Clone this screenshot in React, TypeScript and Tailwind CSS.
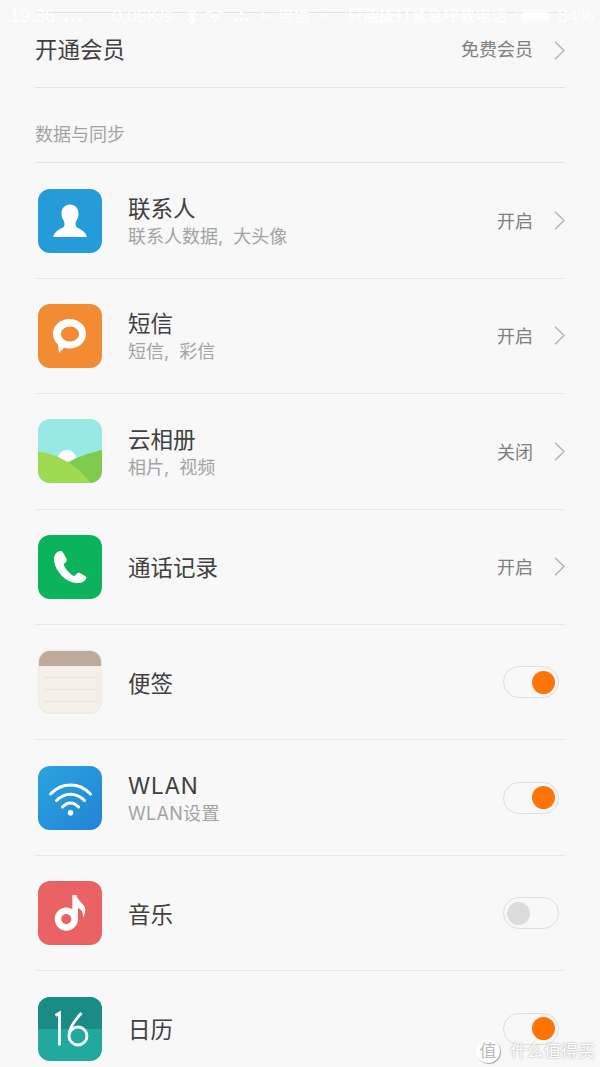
import { Bluetooth } from 'lucide-react';
import type { ReactNode } from 'react';

const font = "font-['Inter','Noto_Sans_CJK_SC',sans-serif]";

function Chevron() {
    return (
        <svg width="11" height="19" viewBox="0 0 11 19" fill="none" className="ml-[21px] shrink-0">
            <path d="M1 0.800 L10 9.500 L1 18.200" stroke="#b4b4b4" strokeWidth="1.500" />
        </svg>
    );
}

function Toggle({ on }: { on: boolean }) {
    return (
        <div
            className={`mr-[6px] flex h-[32px] w-[56px] items-center rounded-full border border-[#dedede] ${
                on ? 'justify-end pr-[3px]' : 'justify-start pl-[3px]'
            }`}
        >
            <div className={`h-[23px] w-[23px] rounded-full ${on ? 'bg-[#ff7505]' : 'bg-[#dcdcdc]'}`} />
        </div>
    );
}

function IconBox({ className, children }: { className?: string; children?: ReactNode }) {
    return (
        <div className={`ml-[3px] h-[64px] w-[64px] shrink-0 overflow-hidden rounded-[12px] ${className ?? ''}`}>
            {children}
        </div>
    );
}

function ContactsIcon() {
    return (
        <IconBox className="bg-[#269bd9]">
            <svg viewBox="0 0 64 64" className="h-full w-full">
                <path
                    fill="#fff"
                    d="M32 15.500 C37 15.500 40.500 19 40.500 24.500 C40.500 27 40 29 39 30.500 C38 32 37.500 33.500 37.500 35 C37.500 37 38.500 38.500 41 39.500 C44 41 47 43 48.500 46.500 C48.800 47.500 48.300 48 47.500 48 L16.500 48 C15.700 48 15.200 47.500 15.500 46.500 C17 43 20 41 23 39.500 C25.500 38.500 26.500 37 26.500 35 C26.500 33.500 26 32 25 30.500 C24 29 23.500 27 23.500 24.500 C23.500 19 27 15.500 32 15.500 Z"
                />
            </svg>
        </IconBox>
    );
}

function SmsIcon() {
    return (
        <IconBox className="bg-[#f28b32]">
            <svg viewBox="0 0 64 64" className="h-full w-full">
                <path
                    fill="#fff"
                    fillRule="evenodd"
                    d="M31.500 15 C41 15 48 21.500 48 29.500 C48 38 41 44.500 31.500 44.500 C29 44.500 27.500 44.200 26 43.700 L21 49 L20 40.800 C17 38 15 34 15 29.500 C15 21.500 22 15 31.500 15 Z M32 22.500 C27 22.500 23 25.800 23 30 C23 34.200 27 37.500 32 37.500 C37 37.500 41 34.200 41 30 C41 25.800 37 22.500 32 22.500 Z"
                />
            </svg>
        </IconBox>
    );
}

function GalleryIcon() {
    return (
        <IconBox className="bg-[#98e9e5]">
            <svg viewBox="0 0 64 64" className="h-full w-full">
                <circle cx="29" cy="40.500" r="9.500" fill="#fff" />
                <path fill="#7fcb4b" d="M29 44 C39 38 51 34 64 31 L64 64 L29 64 Z" />
                <path fill="#9edb52" d="M0 32.500 C12 34 22 38 31 44 C41 50 47 57 53 64 L0 64 Z" />
            </svg>
        </IconBox>
    );
}

function PhoneIcon() {
    return (
        <IconBox className="bg-[#0ab35c]">
            <svg viewBox="0 0 64 64" className="h-full w-full">
                <path
                    fill="#fff"
                    d="M20.500 16.500 C18 17.500 16 20 16 24 C16 30 19.500 36.500 24.500 41.500 C29.500 46.500 36.500 48.500 41.500 48 C44.500 47.700 46.500 46 48 44 C48.700 43 48.500 42 47.500 41.300 L42 38 C41 37.500 40 37.500 39.300 38.300 L37 40.500 C36.300 41 35.500 41 34.800 40.500 C31 38 28 34.500 26 30.500 C25.700 29.700 25.800 29 26.300 28.500 L28.300 26.500 C29 25.700 29 24.800 28.500 23.800 L25 17.500 C24 16 22 15.800 20.500 16.500 Z"
                />
            </svg>
        </IconBox>
    );
}

function NotesIcon() {
    return (
        <IconBox className="flex flex-col border border-[#efe9e2] bg-[#f4f0e9]">
            <div className="h-[15px] shrink-0 bg-[#bcaa9b]" />
            <div className="mx-[5px] mt-[11px] flex flex-col gap-[11px]">
                <div className="h-px bg-[#e8e3da]" />
                <div className="h-px bg-[#e8e3da]" />
                <div className="h-px bg-[#e8e3da]" />
            </div>
        </IconBox>
    );
}

function WifiIcon() {
    return (
        <IconBox className="bg-gradient-to-br from-[#2aa5de] to-[#2383d6]">
            <svg viewBox="0 0 64 64" className="h-full w-full" fill="none" stroke="#fff" strokeWidth="3" strokeLinecap="round">
                <path d="M12.500 28 C24 16 41 16 52.500 28" />
                <path d="M18.500 34.500 C27 26 38 26 46.500 34.500" />
                <path d="M24.500 41 C29 35.500 36 35.500 40.500 41" />
                <circle cx="32.500" cy="46.700" r="2.800" fill="#fff" stroke="none" />
            </svg>
        </IconBox>
    );
}

function MusicIcon() {
    return (
        <IconBox className="bg-[#ea6264]">
            <svg viewBox="0 0 64 64" className="h-full w-full">
                <path
                    fill="#fff"
                    fillRule="evenodd"
                    d="M34.300 14 L38.500 14 C39.500 19 42.500 20 45.500 24 C48 27.500 48 31 45 37 C45.500 32.500 44 28.500 40 27 L40 38 C40 44.500 34.800 49.700 28.300 49.700 C22 49.700 16.700 44.500 16.700 38 C16.700 31.700 22 26.500 28.300 26.500 C30.500 26.500 32.500 27.200 34.300 28.300 Z M28.300 33 C25.500 33 23.300 35.300 23.300 38 C23.300 40.800 25.500 43 28.300 43 C31 43 33.300 40.800 33.300 38 C33.300 35.300 31 33 28.300 33 Z"
                />
            </svg>
        </IconBox>
    );
}

function CalendarIcon() {
    return (
        <IconBox className="bg-[#21a89f]">
            <svg viewBox="0 0 64 64" className="h-full w-full" fill="none" stroke="#fff" strokeWidth="2.800">
                <rect width="64" height="32" fill="#1b8c85" stroke="none" />
                <path d="M17.500 18.500 L21.500 16 L21.500 48.500" />
                <path d="M43.500 16 C36 24 31 31 31 38.500" />
                <circle cx="40" cy="39" r="9" />
            </svg>
        </IconBox>
    );
}

type Row = {
    icon: ReactNode;
    title: string;
    sub?: string;
    status?: string;
    toggle?: boolean;
    latin?: boolean;
};

const rows: Row[] = [
    { icon: <ContactsIcon />, title: '联系人', sub: '联系人数据, 大头像', status: '开启' },
    { icon: <SmsIcon />, title: '短信', sub: '短信, 彩信', status: '开启' },
    { icon: <GalleryIcon />, title: '云相册', sub: '相片, 视频', status: '关闭' },
    { icon: <PhoneIcon />, title: '通话记录', status: '开启' },
    { icon: <NotesIcon />, title: '便签', toggle: true },
    { icon: <WifiIcon />, title: 'WLAN', sub: 'WLAN设置', toggle: true, latin: true },
    { icon: <MusicIcon />, title: '音乐', toggle: false },
    { icon: <CalendarIcon />, title: '日历', toggle: true },
];

function StatusBar() {
    return (
        <div className="absolute left-0 top-0 flex h-[32px] w-full items-center whitespace-nowrap pl-[10px] font-['Liberation_Sans','Noto_Sans_CJK_SC',sans-serif] text-[18px] leading-none text-white">
            <span className="w-[54px]">19:36</span>
            <span className="flex w-[48px] gap-[3px] pt-[8px]">
                <i className="h-[4px] w-[4px] rounded-full bg-white" />
                <i className="h-[4px] w-[4px] rounded-full bg-white" />
                <i className="h-[4px] w-[4px] rounded-full bg-white" />
            </span>
            <span className="w-[71px]">0.06K/s</span>
            <Bluetooth size={17} strokeWidth={2.500} className="mr-[5px]" />
            <svg width="20" height="14" viewBox="0 0 20 14" fill="none" stroke="#fff" strokeWidth="2" className="mr-[8px]">
                <path d="M1.500 5 C6 0.500 14 0.500 18.500 5" />
                <path d="M5 8.500 C8 6 12 6 15 8.500" />
                <circle cx="10" cy="12" r="1.500" fill="#fff" stroke="none" />
            </svg>
            <svg width="16" height="12" viewBox="0 0 16 12" fill="#fff" className="mr-[11px]">
                <rect x="7" y="2" width="3" height="3" />
                <rect x="1" y="8" width="3" height="3" />
                <rect x="7" y="8" width="3" height="3" />
                <rect x="12" y="8" width="3" height="3" />
            </svg>
            <span className="w-[18px] text-[11px]">1×</span>
            <span className="w-[41px] text-[16px]">电信</span>
            <span className="w-[28px] text-[14px]">×</span>
            <span className="w-[168px] text-[16px] font-medium">只能拨打紧急呼救电话</span>
            <span className="mr-[7px] flex h-[13px] w-[36px] items-center justify-end rounded-full border border-white pr-[1px]">
                <i className="h-[9px] w-[28px] rounded-[4px] bg-white" />
            </span>
            <span>84%</span>
        </div>
    );
}

export default function App() {
    return (
        <div className={`relative h-[1067px] w-[600px] overflow-hidden bg-[#f8f8f8] ${font}`}>
            <StatusBar />
            <div className="px-[35px]">
                <div className="h-[13px] border-b border-[#e3e3e3]" />
                <div className="flex h-[75px] items-center border-b border-[#e3e3e3]">
                    <span className="text-[22.500px] leading-[30px] text-[#404040]">开通会员</span>
                    <span className="ml-auto text-[18px] leading-[30px] text-[#7f7f7f]">免费会员</span>
                    <Chevron />
                </div>
                <div className="flex h-[75.300px] items-center border-b border-[#e3e3e3] pt-[19px] text-[18px] text-[#a3a3a3]">
                    数据与同步
                </div>
                {rows.map((row) => (
                    <div key={row.title} className="flex h-[115.450px] items-center border-b border-[#e8e8e8]">
                        {row.icon}
                        <div className={`ml-[26px] flex flex-col ${row.sub ? 'mt-[2px]' : 'mt-[3px]'}`}>
                            <span className={`text-[22.500px] leading-[30px] text-[#404040] ${row.latin ? 'tracking-[0.8px]' : ''}`}>
                                {row.title}
                            </span>
                            {row.sub && (
                                <span
                                    className={`mt-[1px] text-[18px] leading-[24px] text-[#a3a3a3] [word-spacing:5px] ${
                                        row.latin ? 'tracking-[0.3px]' : ''
                                    }`}
                                >
                                    {row.sub}
                                </span>
                            )}
                        </div>
                        <div className="ml-auto flex items-center">
                            {row.status && <span className="pt-[2px] text-[18px] text-[#7f7f7f]">{row.status}</span>}
                            {row.status && <Chevron />}
                            {row.toggle !== undefined && <Toggle on={row.toggle} />}
                        </div>
                    </div>
                ))}
            </div>
            <div className="absolute bottom-[4px] right-[5px] flex items-center text-[17px] leading-none text-white [text-shadow:0_0_2px_#999]">
                <span className="mr-[10px] flex h-[24px] w-[24px] items-center justify-center rounded-full bg-white text-[17px] text-[#bbb] shadow-[1px_1px_1px_#aaa] [text-shadow:none]">
                    值
                </span>
                什么值得买
            </div>
        </div>
    );
}
